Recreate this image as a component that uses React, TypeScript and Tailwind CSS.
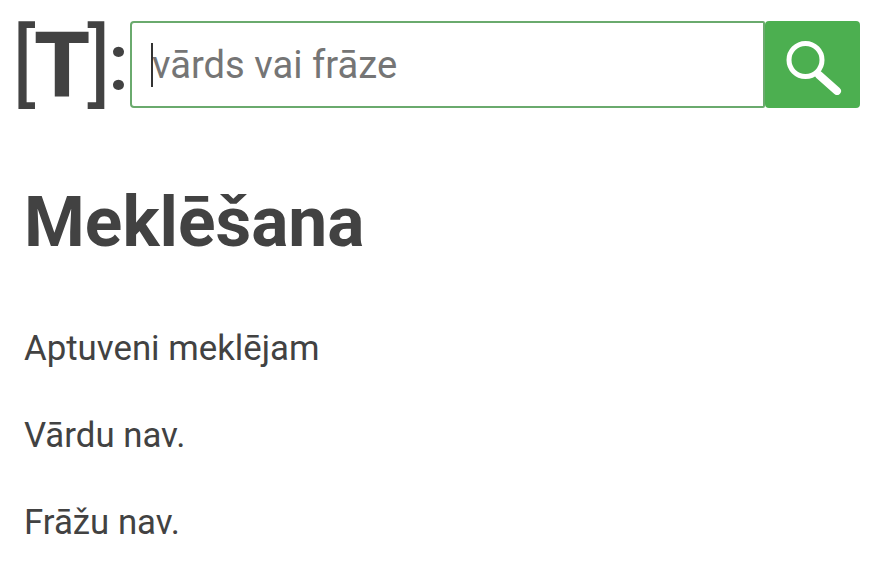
export default function App() {
  return (
    <div className="h-[568px] w-[869px] overflow-hidden bg-white font-['Roboto',sans-serif] text-[#424242]">
      <header className="flex h-[129px] items-start pl-[12px] pt-[21px]">
        {/* logo */}
        <div className="flex h-[87px] w-[118px] items-center leading-none">
          <span className="text-[90px] font-normal leading-none tracking-[-2px]">[</span>
          <span className="mt-[4px] text-[90px] font-extrabold leading-none tracking-[-3px]">T</span>
          <span className="text-[90px] font-normal leading-none tracking-[-3px]">]</span>
          <span className="-mt-[3px] text-[80px] font-medium leading-none">:</span>
        </div>
        <div className="relative h-[87px] w-[635px]">
          <input
            type="text"
            placeholder="vārds vai frāze"
            className="h-full w-full rounded-l-[4px] rounded-r-[2px] border-2 border-[#6aaa6d] bg-white pl-[20px] text-[38.2px] outline-none placeholder:text-[#757575]"
          />
          <div className="absolute left-[21px] top-[22px] h-[44px] w-[2px] bg-[#333]" />
        </div>
        <button className="flex h-[87px] w-[95px] items-center justify-center rounded-[4px] bg-[#4caf50]">
          <svg width="60" height="60" viewBox="0 0 60 60" fill="none" stroke="white" strokeLinecap="round">
            <circle cx="22.5" cy="25" r="16.5" strokeWidth="5" />
            <path d="M36 40 L54 56" strokeWidth="8" />
          </svg>
        </button>
      </header>
      <main className="px-[24px]">
        <h1 className="mt-[54px] text-[69.5px] font-bold leading-[80px]">Meklēšana</h1>
        <div className="mt-[62px] flex flex-col gap-[40px] text-[34.8px] leading-[47px]">
          <p>Aptuveni meklējam</p>
          <p>Vārdu nav.</p>
          <p>Frāžu nav.</p>
        </div>
      </main>
    </div>
  )
}
